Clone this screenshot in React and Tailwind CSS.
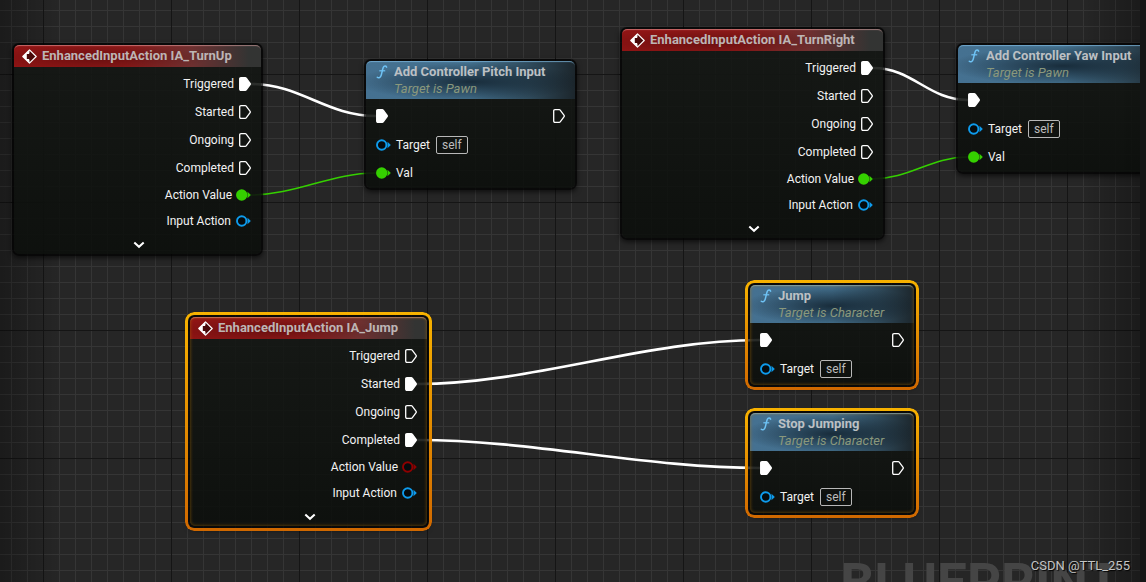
import clsx from "clsx";

const PIN_COLORS = {
  exec: "#ffffff",
  axis: "#35d000",
  object: "#0e9bec",
  bool: "#8f0000",
};

const events = [
  {
    id: "turn-up",
    title: "EnhancedInputAction IA_TurnUp",
    place: "left-[12px] top-[43px] w-[251px]",
    linked: ["Triggered", "Action Value"],
    value: "axis",
  },
  {
    id: "turn-right",
    title: "EnhancedInputAction IA_TurnRight",
    place: "left-[620px] top-[27px] w-[265px]",
    linked: ["Triggered", "Action Value"],
    value: "axis",
  },
  {
    id: "jump",
    title: "EnhancedInputAction IA_Jump",
    place: "left-[188px] top-[315px] w-[241px]",
    linked: ["Started", "Completed"],
    value: "bool",
    selected: true,
  },
];

const calls = [
  {
    id: "pitch",
    title: "Add Controller Pitch Input",
    target: "Target is Pawn",
    place: "left-[364px] top-[59px] w-[213px]",
    val: true,
  },
  {
    id: "yaw",
    title: "Add Controller Yaw Input",
    target: "Target is Pawn",
    place: "left-[956px] top-[43px] w-[213px]",
    val: true,
  },
  {
    id: "do-jump",
    title: "Jump",
    target: "Target is Character",
    place: "left-[748px] top-[283px] w-[168px]",
    selected: true,
  },
  {
    id: "stop-jump",
    title: "Stop Jumping",
    target: "Target is Character",
    place: "left-[748px] top-[411px] w-[168px]",
    selected: true,
  },
];

const wires = [
  { d: "M251 84 C301 84 326 116 376 116", type: "exec" },
  { d: "M250 195 C296 195 330 173 376 173", type: "axis" },
  { d: "M873 68 C913 68 928 100 968 100", type: "exec" },
  { d: "M872 179 C910 179 930 157 968 157", type: "axis" },
  { d: "M417 384 C532 384 645 340 760 340", type: "exec" },
  { d: "M417 440 C532 440 645 468 760 468", type: "exec" },
];

function ExecPin({ filled }) {
  return (
    <svg className="shrink-0" width="12" height="14" viewBox="0 0 12 14" aria-hidden="true">
      <path
        d="M2 .7H6.2Q6.8 .7 7.2 1.2L11.1 6.3Q11.5 7 11.1 7.7L7.2 12.8Q6.8 13.3 6.2 13.3H2Q.7 13.3 .7 12V2Q.7 .7 2 .7Z"
        fill={filled ? "#fff" : "none"}
        stroke="#fff"
        strokeWidth="1.3"
      />
    </svg>
  );
}

function ValuePin({ type, filled }) {
  const color = PIN_COLORS[type];
  return (
    <svg className="shrink-0" width="15" height="12" viewBox="0 0 15 12" aria-hidden="true">
      <circle cx="5.7" cy="6" r="4.7" fill={filled ? color : "#050b0e"} stroke={color} strokeWidth="1.9" />
      <path d="M11.5 2.8L14.8 6L11.5 9.2Z" fill={color} />
    </svg>
  );
}

function EventIcon() {
  return (
    <svg className="shrink-0" width="15" height="15" viewBox="0 0 15 15" aria-hidden="true">
      <path d="M7.5 .8L14.2 7.5L7.5 14.2L.8 7.5Z" fill="#4a0a0a" stroke="#fff" strokeWidth="1.2" strokeLinejoin="round" />
      <path d="M7.5 .8V5H4.8V10H7.5V14.2L.8 7.5Z" fill="#fff" />
      <path d="M5.2 5.8H7.4V3.4L11.4 7.5L7.4 11.6V9.2H5.2Z" fill="#4a0a0a" />
    </svg>
  );
}

function FunctionIcon() {
  return (
    <svg className="mt-px shrink-0" width="12" height="14" viewBox="0 0 12 14" fill="none" stroke="#6fc3f5" aria-hidden="true">
      <path d="M10.6 2.1C9.9 .7 8.1 .7 7.3 2.3C6.4 4.2 6.1 7.5 5.2 10.3C4.5 12.6 2.6 13.5 1.3 12.3" strokeWidth="1.5" strokeLinecap="round" />
      <path d="M3.3 5.8H9.2" strokeWidth="1.2" />
    </svg>
  );
}

function Node({ place, selected, children }) {
  return (
    <section
      className={clsx(
        "absolute rounded-[7px] border-2 border-black/75 bg-linear-to-b from-[#151815]/90 to-[#0c0f0c]/90 bg-clip-padding shadow-[0_2px_5px_rgba(0,0,0,0.6)]",
        place
      )}
    >
      {selected && (
        <div className="pointer-events-none absolute -inset-[5px] rounded-[9px] bg-linear-to-b from-[#f7b200] to-[#d06800] p-[3px] [mask:linear-gradient(#000_0_0)_content-box_exclude,linear-gradient(#000_0_0)]" />
      )}
      {children}
      {selected && (
        <div className="pointer-events-none absolute inset-0 rounded-[5px] shadow-[inset_0_0_3px_1px_rgba(190,120,0,0.35)]" />
      )}
    </section>
  );
}

function EventNode({ title, place, linked, value, selected }) {
  return (
    <Node place={place} selected={selected}>
      <header className="flex h-[22px] items-center gap-[5px] rounded-t-[5px] bg-[radial-gradient(ellipse_45%_60%_at_35%_60%,rgba(50,0,0,0.4),transparent),linear-gradient(to_right,#8f1414,#8f1a1a_45%,#6e3030_72%,#333433_95%)] pl-2 shadow-[inset_0_2px_1px_-1px_rgba(255,190,190,0.5)]">
        <EventIcon />
        <h2 className="whitespace-nowrap text-[13px] leading-4 font-bold text-[#bdb5b5]">{title}</h2>
      </header>
      <ul className="pt-[3px] pr-[10px]">
        {["Triggered", "Started", "Ongoing", "Completed"].map((name) => (
          <li key={name} className="flex h-7 items-center justify-end gap-[5px]">
            {name}
            <ExecPin filled={linked.includes(name)} />
          </li>
        ))}
        <li className="flex h-[26px] items-center justify-end gap-1">
          Action Value
          <ValuePin type={value} filled={linked.includes("Action Value")} />
        </li>
        <li className="flex h-[26px] items-center justify-end gap-[5px]">
          Input Action
          <ValuePin type="object" />
        </li>
      </ul>
      <button type="button" aria-label="Show more pins" className="flex h-5 w-full items-center justify-center pt-0.5 pl-0.5">
        <svg width="12" height="8" viewBox="0 0 12 8" fill="none" stroke="#fff" strokeWidth="2" aria-hidden="true">
          <path d="M1.3 1.4L6 5.8L10.7 1.4" />
        </svg>
      </button>
    </Node>
  );
}

function CallNode({ title, target, place, val, selected }) {
  return (
    <Node place={place} selected={selected}>
      <header className="flex h-[38px] gap-[6px] rounded-t-[5px] bg-[radial-gradient(ellipse_55%_50%_at_50%_55%,rgba(10,22,32,0.75),transparent),linear-gradient(to_right,#457191,#436f8c_50%,#2f4a5b_78%,#1c262c)] pt-[3px] pl-[10px] shadow-[inset_0_2px_1px_-1px_rgba(130,190,230,0.7)]">
        <FunctionIcon />
        <div className="whitespace-nowrap">
          <h2 className="text-[13px] leading-4 font-bold text-[#bcc0c4]">{title}</h2>
          <p className="text-[13px] leading-[18px] text-[#8a987c] italic">{target}</p>
        </div>
      </header>
      <ul className={clsx("px-[10px] pt-[3px]", val ? "pb-px" : "pb-[2px]")}>
        <li className="mb-px flex h-7 items-center justify-between">
          <ExecPin filled />
          <ExecPin />
        </li>
        <li className="flex h-7 items-center gap-[5px]">
          <ValuePin type="object" />
          Target
          <span className="ml-px flex h-[18px] items-center rounded-[2px] border border-[#b8b8b8] px-[5px] text-[#bdbdbd]">self</span>
        </li>
        {val && (
          <li className="flex h-7 items-center gap-[5px]">
            <ValuePin type="axis" filled />
            Val
          </li>
        )}
      </ul>
    </Node>
  );
}

export default function App() {
  return (
    <div className="flex h-screen bg-[#161616] font-[Roboto,sans-serif] text-[12px] leading-4 text-[#f2f2f2]">
      <main className="relative min-w-0 flex-1 overflow-hidden bg-[#262626]">
        {/* grid: fine lines every 16px, dark ones every 128px */}
        <div className="absolute inset-0 bg-[linear-gradient(to_right,#151515_1px,transparent_1px),linear-gradient(to_bottom,#151515_1px,transparent_1px),linear-gradient(to_right,#353535_1px,transparent_1px),linear-gradient(to_bottom,#353535_1px,transparent_1px)] bg-[length:128px_128px,128px_128px,16px_16px,16px_16px] bg-position-[43px_74px,43px_74px,11px_10px,11px_10px]" />
        <div className="absolute inset-0 bg-[linear-gradient(to_right,rgba(0,0,0,0.3),transparent_60px,transparent_calc(100%-60px),rgba(0,0,0,0.3))]" />
        <div className="absolute right-[20px] -bottom-[28px] text-[53px] leading-none font-bold text-[#454545]">BLUEPRINT</div>

        <svg className="absolute inset-0 h-full w-full" fill="none" aria-hidden="true">
          {wires.map(({ d, type }) => (
            <path key={d} d={d} stroke={PIN_COLORS[type]} strokeWidth={type === "exec" ? 2.6 : 1.6} />
          ))}
        </svg>

        {events.map((node) => (
          <EventNode key={node.id} {...node} />
        ))}
        {calls.map((node) => (
          <CallNode key={node.id} {...node} />
        ))}
      </main>
      <aside className="w-[6px] shrink-0 bg-[#161616]" />
      <p className="absolute right-4 bottom-2 text-[13px] text-[#c4c4c4] [text-shadow:1px_1px_1px_#000]">CSDN @TTL_255</p>
    </div>
  );
}
